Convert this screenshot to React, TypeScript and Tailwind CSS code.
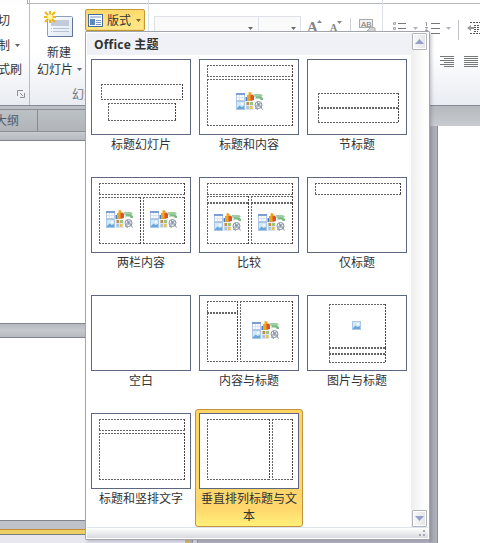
import React from "react";

type Rect = [number, number, number, number];
type Point = [number, number];

interface Layout {
  name: string;
  boxes: Rect[];
  icons?: Point[];
  picture?: Point;
  selected?: boolean;
}

const layouts: Layout[] = [
  { name: "标题幻灯片", boxes: [[10, 25, 82, 16], [17, 44, 68, 18]] },
  { name: "标题和内容", boxes: [[8, 6, 86, 12], [8, 20, 86, 47]], icons: [[37, 33]] },
  { name: "节标题", boxes: [[11, 34, 81, 15], [11, 49, 81, 15]] },
  { name: "两栏内容", boxes: [[8, 6, 86, 12], [8, 20, 42, 47], [52, 20, 42, 47]], icons: [[15, 33], [59, 33]] },
  { name: "比较", boxes: [[8, 6, 86, 12], [8, 19, 42, 7], [52, 19, 42, 7], [8, 26, 42, 41], [52, 26, 42, 41]], icons: [[15, 36], [59, 36]] },
  { name: "仅标题", boxes: [[8, 6, 86, 12]] },
  { name: "空白", boxes: [] },
  { name: "内容与标题", boxes: [[8, 6, 31, 12], [8, 18, 31, 49], [41, 6, 53, 61]], icons: [[53, 26]] },
  { name: "图片与标题", boxes: [[22, 9, 57, 44], [22, 53, 57, 6], [22, 59, 57, 9]], picture: [45, 26] },
  { name: "标题和竖排文字", boxes: [[8, 6, 86, 12], [8, 20, 86, 47]] },
  { name: "垂直排列标题与文本", boxes: [[8, 6, 63, 61], [73, 6, 21, 61]], selected: true },
];

function Picture() {
  return (
    <g>
      <rect x="0.5" y="0.5" width="8" height="8" fill="#d3e9f9" stroke="#a9c8e6" />
      <path d="M1 7 L3.5 4.5 L5.5 6 L8 5 V8 H1z" fill="#6ba6d8" />
      <circle cx="6" cy="3" r="1" fill="#fff" />
    </g>
  );
}

function ContentIcons() {
  return (
    <g>
      <rect x="0.5" y="1.5" width="8" height="7" fill="#fff" stroke="#b3c7e6" />
      <path d="M0 1h9v2H0z" fill="#7a9dd6" />
      <path d="M3.5 3v5M6 3v5M1 5.5h7" stroke="#dbe4f2" />
      <path d="M9.500 5h3v4h-3z" fill="#4f7fc2" />
      <path d="M11 3h3v6h-3z" fill="#e9a91c" />
      <path d="M12.500 0.500l1.500-0.500 1.500 1V8.500h-3z" fill="#f0a41c" />
      <path d="M14.500 3l2.500-0.500 1 1V8l-3.500 1z" fill="#d9542a" />
      <path d="M18 2h7l2 1.500-2 1.500h-7z" fill="#9dcda2" />
      <path d="M20 4.500h5l2 1.500v2h-2l-1.500-1.500h-3.500z" fill="#7dba84" />
      <path d="M18 3l2 4.500" stroke="#c3e0c6" fill="none" />
      <g transform="translate(0 9)"><Picture /></g>
      <rect x="9.500" y="9.500" width="8" height="8.500" fill="#d9e6ef" />
      <path d="M10.500 10h2.500v3h-2.500z" fill="#c98a4f" />
      <path d="M14 10h3v3h-3z" fill="#9cc47c" />
      <path d="M10.500 14h2.500v3h-2.500z" fill="#a8c3dd" />
      <path d="M14 14h2.500v3H14z" fill="#ecc04a" />
      <circle cx="22.500" cy="13" r="3.500" fill="#eef1f5" stroke="#8592a2" />
      <circle cx="22.500" cy="12.500" r="1.200" fill="#7c8a9b" />
      <path d="M20 14h5M19 16l3 1.500M24.500 14.500l2 3M21 10l1 2M24.500 11l-1 1" stroke="#8592a2" fill="none" />
    </g>
  );
}

function Thumbnail({ layout }: { layout: Layout }) {
  return (
    <svg width="100" height="76" viewBox="0 0 100 76" className="block shrink-0">
      <rect x="0.5" y="0.5" width="99" height="75" fill="#fff" stroke="#5d6880" />
      {layout.boxes.map(([x, y, w, h], i) => (
        <g key={i} stroke="#666" strokeDasharray="2 1" shapeRendering="crispEdges">
          <path d={`M${x} ${y + 0.5}h${w}M${x} ${y + h - 0.5}h${w}M${x + 0.5} ${y}v${h}`} />
          <path d={`M${x + w - 0.5} ${y}v${h}`} stroke="#444" />
        </g>
      ))}
      {layout.icons?.map(([x, y], i) => (
        <g key={i} transform={`translate(${x} ${y})`}><ContentIcons /></g>
      ))}
      {layout.picture && (
        <g transform={`translate(${layout.picture[0]} ${layout.picture[1]})`}><Picture /></g>
      )}
    </svg>
  );
}

function Caret({ color = "#666" }: { color?: string }) {
  return (
    <svg width="5" height="3" viewBox="0 0 5 3" className="shrink-0">
      <path d="M0 0h5L2.500 3z" fill={color} />
    </svg>
  );
}

function NewSlideIcon() {
  return (
    <svg width="30" height="27" viewBox="0 0 30 27">
      <defs>
        <linearGradient id="slide" x1="0" y1="0" x2="1" y2="1">
          <stop offset="0" stopColor="#fff" />
          <stop offset="1" stopColor="#dde7f4" />
        </linearGradient>
      </defs>
      <rect x="3.500" y="5.500" width="25" height="20" rx="1" fill="url(#slide)" stroke="#8fa0bb" />
      <path d="M4 25.500h24.500V7" stroke="#5f7699" fill="none" />
      <rect x="7" y="9" width="18" height="6" fill="#c3cbdb" />
      <path d="M7 17.500h18M7 20.500h18" stroke="#b7c1d2" strokeDasharray="1 1 16" />
      <path d="M6 0v12M0 6h12M1 1l10 10M11 1L1 11" stroke="#edb51c" strokeWidth="2" />
      <circle cx="6" cy="6" r="2.800" fill="#fff7a8" />
    </svg>
  );
}

function LayoutIcon() {
  return (
    <svg width="15" height="13" viewBox="0 0 15 13">
      <rect x="0.5" y="0.5" width="14" height="12" fill="#fff" stroke="#456a9e" />
      <path d="M2 2h11v2H2z" fill="#b7cbe5" />
      <path d="M2 5h5v6H2z" fill="#5e89bd" />
      <path d="M8 6.500h5M8 8.500h5M8 10.500h5" stroke="#7998c2" />
    </svg>
  );
}

function ClipboardGroup() {
  return (
    <div className="flex w-[30px] shrink-0 flex-col border-r border-[#b9bcc2] pt-[12px] text-[12px] leading-[16px]">
      <div className="-ml-[2px] whitespace-nowrap">切</div>
      <div className="-ml-[2px] mt-[9px] flex items-center gap-[5px] whitespace-nowrap">制<Caret /></div>
      <div className="-ml-[2px] mt-[8px] whitespace-nowrap">式刷</div>
      <svg width="8" height="8" viewBox="0 0 8 8" className="mt-[13px] ml-[17px]">
        <path d="M0.500 6V0.500H6M7.500 3v4.500H3M3 3l3 3" stroke="#8a8e95" fill="none" />
      </svg>
    </div>
  );
}

function SlidesGroup() {
  return (
    <div className="flex w-[119px] shrink-0 border-r border-[#dcdfe4] pl-[7px]">
      <div className="flex w-[48px] shrink-0 flex-col text-[12px] leading-[16px]">
        <div className="mt-[11px] ml-[7px] h-[27px]"><NewSlideIcon /></div>
        <div className="mt-[6px] ml-[10px]">新建</div>
        <div className="mt-[1px] flex items-center gap-[4px] whitespace-nowrap">幻灯片<Caret /></div>
        <div className="mt-[9px] ml-[35px] whitespace-nowrap text-[#73777f]">幻灯片</div>
      </div>
      <button className="mt-[9px] flex h-[22px] w-[60px] items-center rounded-[2px] border border-[#c29a32] bg-gradient-to-b from-[#ffd968] to-[#ffe98a] pl-[2px] text-[12px] shadow-[inset_0_0_0_1px_#fbd879]">
        <LayoutIcon />
        <span className="ml-[4px] whitespace-nowrap">版式</span>
        <span className="ml-[5px] flex"><Caret color="#7d6630" /></span>
      </button>
    </div>
  );
}

function FontGroup() {
  return (
    <div className="flex w-[234px] shrink-0 border-r border-[#dcdfe4] pt-[16px] pl-[5px]">
      <div className="flex h-[20px] w-[105px] justify-end border border-[#dfe3e9] bg-[#fafafb] pt-[10px] pr-[5px]"><Caret color="#6b6b6b" /></div>
      <div className="-ml-px flex h-[20px] w-[43px] justify-end border border-[#dfe3e9] bg-[#fafafb] pt-[10px] pr-[4px]"><Caret color="#6b6b6b" /></div>
      <div className="ml-[6px] flex font-['Liberation_Serif',serif] font-bold text-[#858585]">
        <span className="mt-[3px] w-[10px] text-[15px] leading-[16px]">A</span>
        <svg width="5" height="3" className="mt-[4px]"><path d="M0 3h5L2.500 0z" fill="#888" /></svg>
        <span className="mt-[6px] ml-[8px] w-[7px] text-[10px] leading-[12px]">A</span>
        <svg width="5" height="3" className="mt-[5px]"><path d="M0 0h5L2.500 3z" fill="#888" /></svg>
      </div>
      <div className="mt-[2px] ml-[8px] h-[18px] w-px bg-[#cdd0d5]" />
      <svg width="18" height="14" viewBox="0 0 18 14" className="mt-[2px] ml-[8px]">
        <rect x="0.500" y="1.500" width="13" height="8" fill="#f2f2f2" stroke="#aaa" />
        <text x="2" y="8.500" fontSize="8" fontFamily="Liberation Sans, sans-serif" fill="#777">AB</text>
        <path d="M8 13l4-4 4 1v3l-3 1z" fill="#d3d3d6" stroke="#aaa" />
      </svg>
    </div>
  );
}

function ParagraphGroup() {
  return (
    <div className="flex w-[97px] shrink-0 flex-col">
      <div className="mt-[20px] ml-[10px] flex h-[20px] w-[87px] items-start">
        <svg width="14" height="14" viewBox="0 0 14 14" className="mt-[1px] shrink-0">
          <path d="M5 2.500h8M5 7.500h8M5 12.500h8" stroke="#777" />
          <path d="M0.500 1.500h2v2h-2zM0.500 6.500h2v2h-2z" fill="#ddd" stroke="#aaa" />
        </svg>
        <span className="mt-[7px] ml-[6px] flex"><Caret color="#b5b5b5" /></span>
        <svg width="15" height="15" viewBox="0 0 15 15" className="mt-[1px] ml-[7px] shrink-0">
          <path d="M6 2.500h9M6 7.500h9M6 12.500h9" stroke="#777" />
          <path d="M0.500 1.500h1V5M0 6.500h2.500L0.500 9.500H3M0.500 11.500h2v2" stroke="#999" fill="none" />
        </svg>
        <span className="mt-[7px] ml-[6px] flex"><Caret color="#b5b5b5" /></span>
        <div className="ml-[7px] h-[20px] w-px shrink-0 bg-[#bfc2c7]" />
        <svg width="14" height="15" viewBox="0 0 14 15" className="mt-[1px] ml-[8px] shrink-0">
          <path d="M3 1.500h11M7 4.500h7M7 6.500h7M7 8.500h7M7 10.500h4M3 12.500h11" stroke="#555" strokeDasharray="2 1" />
          <path d="M0 7l4-3v2h3v2H4v2z" fill="#999" />
        </svg>
      </div>
      <div className="mt-[16px] ml-[57px] flex gap-[10px]">
        <svg width="14" height="11" viewBox="0 0 14 11">
          <path d="M0 0.500h14M4 2.500h10M0 4.500h14M4 6.500h10M0 8.500h14M4 10.500h10" stroke="#777" />
        </svg>
        <svg width="14" height="11" viewBox="0 0 14 11">
          <path d="M0 0.500h14M0 2.500h14M0 4.500h14M0 6.500h14M0 8.500h14M0 10.500h14" stroke="#777" />
        </svg>
      </div>
    </div>
  );
}

function Ribbon() {
  return (
    <div className="h-[106px]">
      <div className="flex h-[4px]">
        <div className="w-[28px] border-r border-[#a9acb1] bg-[#fdfdfe]" />
        <div className="flex-1 border-b border-[#b3b6ba] bg-white" />
      </div>
      <div className="-mt-[4px] flex h-[106px] border-b border-[#858a93] bg-gradient-to-b from-transparent from-50% to-[#e9ecf2]">
        <ClipboardGroup />
        <SlidesGroup />
        <FontGroup />
        <ParagraphGroup />
      </div>
    </div>
  );
}

function Workspace() {
  return (
    <div className="flex h-[437px] bg-[#b8b9c2]">
      <div className="flex w-[190px] flex-col bg-[#bcc0c5]">
        <div className="mt-[3px] flex h-[23px] shrink-0 border-y border-[#8b8f96] bg-gradient-to-b from-[#bcc1c6] to-[#b1b5ba] text-[12px] leading-[19px] text-[#555b66]">
          <div className="w-[38px] border-r border-[#858990]"><span className="-ml-[5px] whitespace-nowrap">大纲</span></div>
        </div>
        <div className="h-[9px] shrink-0 border-b border-[#7e828b] bg-gradient-to-b from-[#c8cbd0] to-[#b6b9bf]" />
        <div className="h-[182px] shrink-0 bg-white" />
        <div className="h-[15px] shrink-0 border-y border-[#80848c] bg-gradient-to-b from-[#b5b9be] via-[#c7cace] to-[#b5b9be]" />
        <div className="h-[182px] shrink-0 bg-white" />
        <div className="h-[9px] shrink-0 border-t border-[#80848c] bg-[#bfc2c8]" />
        <div className="h-[6px] shrink-0 border-t border-b border-t-[#c68a33] border-b-[#777b83] bg-[#edd064]" />
        <div className="flex-1 border-r-[5px] border-[#dcc069] bg-[#e8e7ef]" />
      </div>
      <div className="mr-auto ml-[2px] w-[6px] border-x border-[#9a99a4] bg-[#e2e1e8]" />
      <div className="w-[51px] bg-gradient-to-r from-[#a8abb2] via-[#b8bbc1] to-[#9a9fa5]">
        <div className="h-[20px] bg-gradient-to-b from-[#b5b9be] to-[#c8cbd0]" />
        <div className="ml-[8px] h-[417px] border-l border-[#898e94] bg-white" />
      </div>
    </div>
  );
}

function ScrollBar() {
  return (
    <div className="flex w-[16px] shrink-0 flex-col justify-between bg-gradient-to-r from-[#eeeeef] to-[#fff] to-90%">
      {[true, false].map((up) => (
        <div key={String(up)} className="ml-[1px] flex h-[17px] w-[15px] items-center justify-center rounded-[1px] border border-[#b1b4ba] bg-gradient-to-r from-[#f8f8f9] to-[#e3e4e6] shadow-[inset_0_0_0_1px_#fff]">
          <svg width="9" height="5" viewBox="0 0 9 5"><path d={up ? "M0 5h9L4.500 0z" : "M0 0h9L4.500 5z"} fill="#939fc6" /></svg>
        </div>
      ))}
    </div>
  );
}

function LayoutMenu() {
  return (
    <div className="absolute top-[31px] left-[85px] flex h-[509px] w-[345px] flex-col rounded-[1px] border border-[#a2a5aa] bg-white p-px shadow-[2px_2px_3px_rgba(80,75,110,0.25)]">
      <div className="flex h-[494px] shrink-0">
        <div className="w-[324px] shrink-0">
          <div className="h-[22px] bg-[#eff1f6] pl-[7px] text-[12px] leading-[22px] font-bold">
            <span className="font-['Open_Sans','Noto_Sans_CJK_SC',sans-serif] tracking-[0.2px]">Office 主题</span>
          </div>
          <div className="grid grid-cols-[108px_108px_108px] auto-rows-[118px]">
            {layouts.map((layout) => (
              <div
                key={layout.name}
                className={
                  layout.selected
                    ? "flex flex-col items-center rounded-[3px] border border-[#c39341] bg-gradient-to-b from-[#ffd462] via-[#ffd76d] via-85% to-[#fff078] p-[3px]"
                    : "flex flex-col items-center p-[4px]"
                }
              >
                <Thumbnail layout={layout} />
                <span className="w-[100px] text-center text-[12px] leading-[17px]">{layout.name}</span>
              </div>
            ))}
          </div>
        </div>
        <ScrollBar />
      </div>
      <div className="flex flex-1 items-end justify-end border-t border-[#dce5ee] bg-gradient-to-b from-white to-[#d9dadd] pr-[3px] pb-[2px]">
        <svg width="6" height="6" viewBox="0 0 6 6"><path d="M4 0h2v2H4zM4 4h2v2H4zM0 4h2v2H0z" fill="#a6a9ba" /></svg>
      </div>
    </div>
  );
}

export default function App() {
  return (
    <div className="relative h-[543px] w-[480px] overflow-hidden bg-white font-['Noto_Sans_CJK_SC',sans-serif] text-[#333]">
      <Ribbon />
      <Workspace />
      <LayoutMenu />
    </div>
  );
}
